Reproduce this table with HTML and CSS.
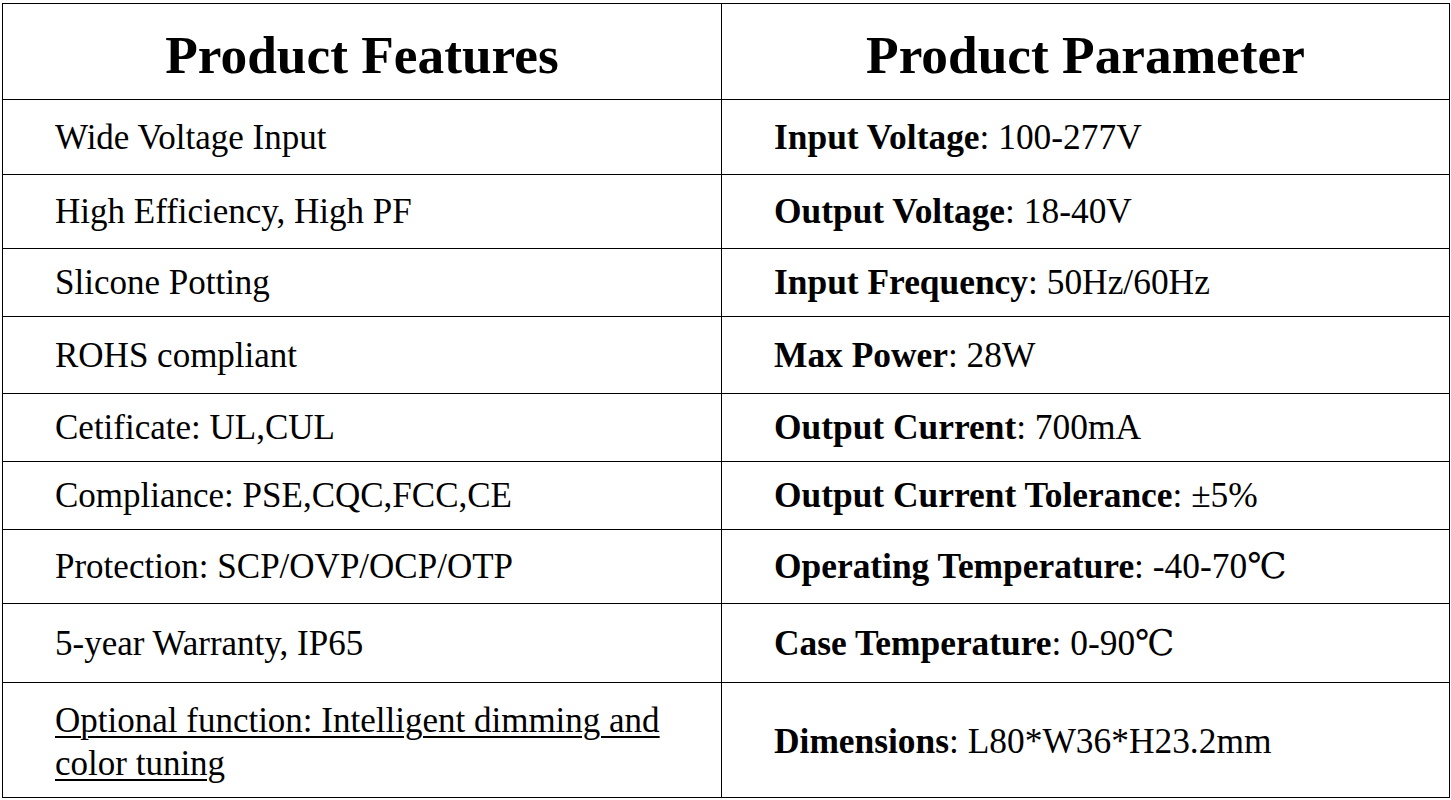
FILE: index.html
```html
<!DOCTYPE html>
<html lang="en">
<head>
<meta charset="utf-8">
<title>Product Features and Parameters</title>
<link rel="stylesheet" href="styles.css">
</head>
<body>
<table class="spec">
  <colgroup>
    <col class="col-features">
    <col class="col-params">
  </colgroup>
  <thead>
    <tr class="head-row">
      <th>Product Features</th>
      <th>Product Parameter</th>
    </tr>
  </thead>
  <tbody>
    <tr>
      <td class="feature">Wide Voltage Input</td>
      <td class="param"><b>Input Voltage</b>: 100-277V</td>
    </tr>
    <tr>
      <td class="feature">High Efficiency, High PF</td>
      <td class="param"><b>Output Voltage</b>: 18-40V</td>
    </tr>
    <tr>
      <td class="feature">Slicone Potting</td>
      <td class="param"><b>Input Frequency</b>: 50Hz/60Hz</td>
    </tr>
    <tr>
      <td class="feature">ROHS compliant</td>
      <td class="param"><b>Max Power</b>: 28W</td>
    </tr>
    <tr>
      <td class="feature">Cetificate: UL,CUL</td>
      <td class="param"><b>Output Current</b>: 700mA</td>
    </tr>
    <tr>
      <td class="feature">Compliance: PSE,CQC,FCC,CE</td>
      <td class="param"><b>Output Current Tolerance</b>: ±5%</td>
    </tr>
    <tr>
      <td class="feature">Protection: SCP/OVP/OCP/OTP</td>
      <td class="param"><b>Operating Temperature</b>: -40-70℃</td>
    </tr>
    <tr>
      <td class="feature">5-year Warranty, IP65</td>
      <td class="param"><b>Case Temperature</b>: 0-90℃</td>
    </tr>
    <tr class="last-row">
      <td class="feature"><span class="underlined">Optional function: Intelligent dimming and color tuning</span></td>
      <td class="param"><b>Dimensions</b>: L80*W36*H23.2mm</td>
    </tr>
  </tbody>
</table>
</body>
</html>
```

FILE: styles.css
```css
html, body {
  margin: 0;
  padding: 0;
  background: #ffffff;
}

body {
  padding: 3px 0 0 2px;
  font-family: "Liberation Serif", "Times New Roman", "DejaVu Serif", serif;
  color: #000000;
}

.spec {
  border-collapse: collapse;
  width: 1447px;
  table-layout: fixed;
}

.col-features { width: 719px; }
.col-params { width: 728px; }

.spec th,
.spec td {
  border: 1px solid #000000;
  padding: 0 52px;
  vertical-align: middle;
}

.spec th {
  font-size: 53.33px;
  font-weight: bold;
  text-align: center;
  padding-top: 8px;
  line-height: 1.15;
}

.spec td {
  line-height: 43px;
  text-align: left;
}

.spec td.feature {
  font-size: 35px;
}

.spec td.param {
  font-size: 35.4px;
}

.spec td b {
  font-weight: bold;
}

.underlined {
  text-decoration: underline;
  text-decoration-thickness: 2px;
  text-underline-offset: 4px;
}

.head-row { height: 96px; }
.spec tbody tr:nth-child(1) { height: 75px; }
.spec tbody tr:nth-child(2) { height: 74px; }
.spec tbody tr:nth-child(3) { height: 68px; }
.spec tbody tr:nth-child(4) { height: 77px; }
.spec tbody tr:nth-child(5) { height: 68px; }
.spec tbody tr:nth-child(6) { height: 68px; }
.spec tbody tr:nth-child(7) { height: 74px; }
.spec tbody tr:nth-child(8) { height: 79px; }
.spec tbody tr:nth-child(9) { height: 115px; }

.spec .last-row td {
  padding-top: 3px;
}
```
